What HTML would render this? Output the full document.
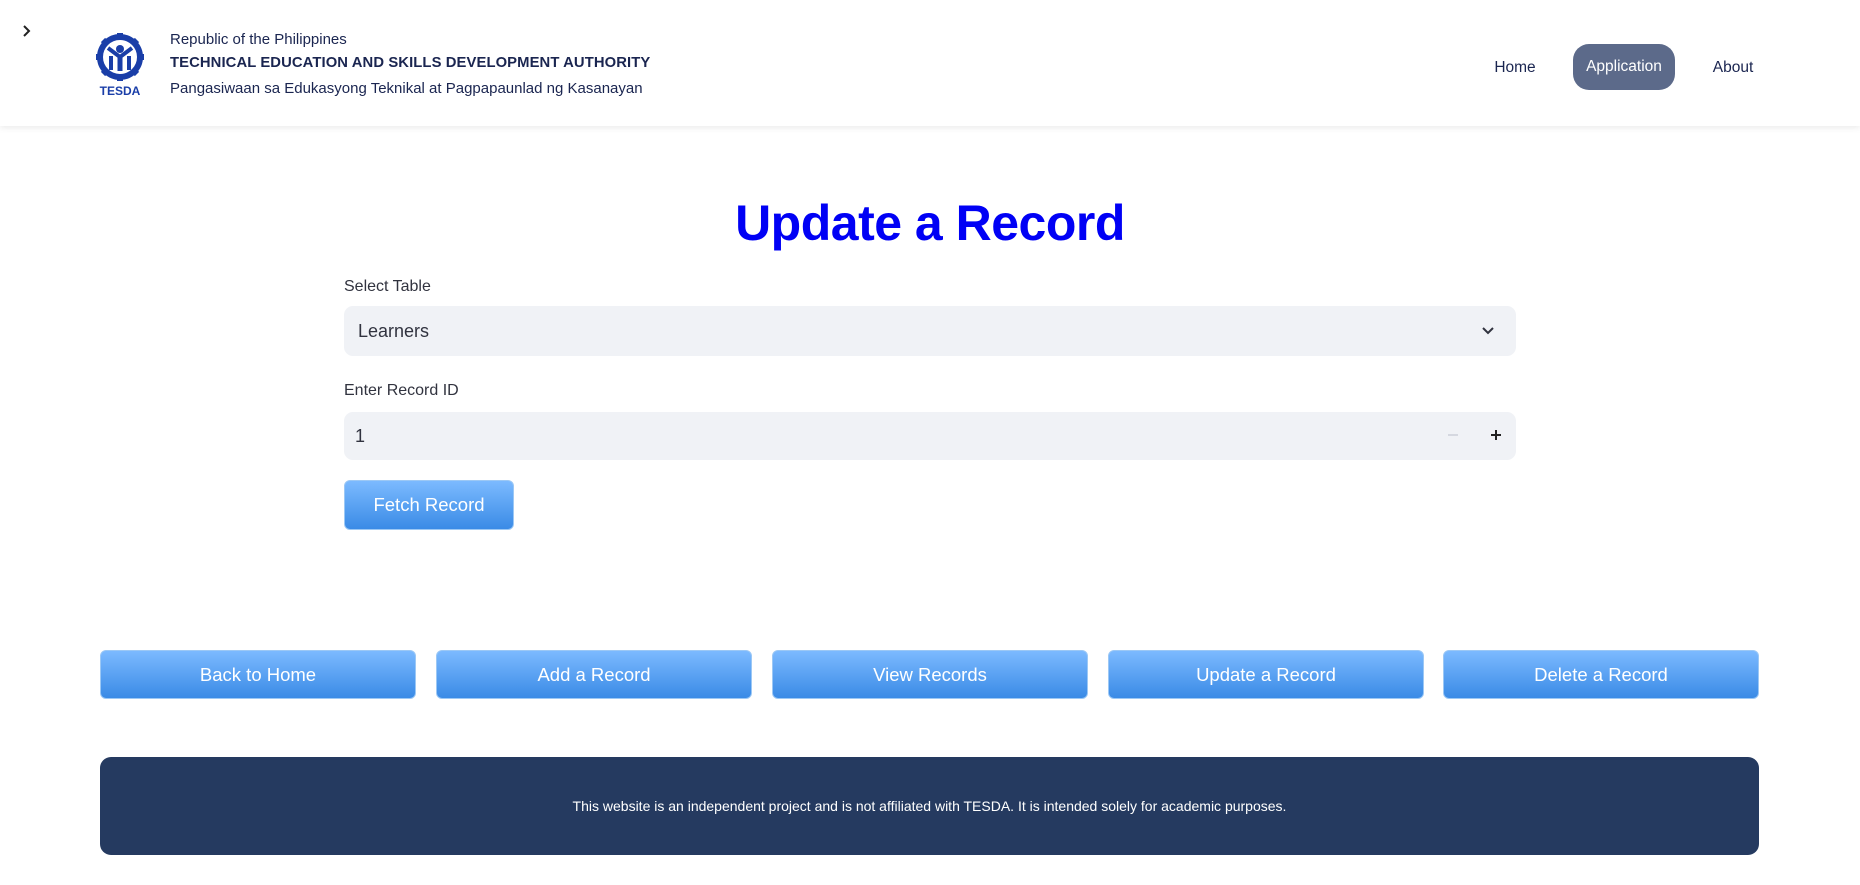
<!DOCTYPE html>
<html><head><meta charset="utf-8"><style>
*{box-sizing:border-box;margin:0;padding:0}
body{width:1860px;height:885px;background:#fff;font-family:"Liberation Sans",sans-serif;position:relative;overflow:hidden;color:#31333f}
.hdr{position:absolute;left:0;top:0;width:1860px;height:126px;background:#fff;box-shadow:0 2px 6px rgba(0,0,0,.08)}
.abs{position:absolute}
.t{position:absolute;left:170px;color:#1a2550;white-space:nowrap}
.nav{position:absolute;top:68px;transform:translate(-50%,-50%);font-size:15.5px;color:#1a2550}
.pill{position:absolute;left:1573px;top:44px;width:102px;height:46px;border-radius:16px;background:#5c6a8a;color:#fff;font-size:15.5px;display:flex;align-items:center;justify-content:center}
h1{position:absolute;left:0;width:1860px;top:190px;text-align:center;font-size:50px;font-weight:bold;color:#0000f5;line-height:66px;letter-spacing:-0.5px}
.lbl{position:absolute;left:344px;font-size:16px;color:#31333f}
.box{position:absolute;left:344px;width:1172px;background:#f0f2f6;border-radius:9px}
.btn{position:absolute;background:linear-gradient(#7cbaff,#3a8be6);border:1px solid #9cc8f5;border-radius:6px;color:#fff;font-size:18.5px;display:flex;align-items:center;justify-content:center}
.foot{position:absolute;left:100px;top:757px;width:1659px;height:98px;background:#253a60;border-radius:11px;color:#fff;font-size:14px;display:flex;align-items:center;justify-content:center}
</style></head><body>
<div class="hdr">
 <svg class="abs" style="left:20px;top:23px" width="14" height="16" viewBox="0 0 14 16"><path d="M4 3l5 5-5 5" fill="none" stroke="#222" stroke-width="2"/></svg>
 <svg class="abs" style="left:94px;top:32px" width="52" height="66" viewBox="0 0 52 66">
  <g fill="#1a3ea8">
   <circle cx="26" cy="25" r="20" fill="none" stroke="#1a3ea8" stroke-width="6"/>
   <g stroke="#1a3ea8" stroke-width="6">
    <path d="M26 1v6M26 43v6M2 25h6M44 25h6M9 8l4 4M43 8l-4 4M9 42l4-4M43 42l-4-4"/>
   </g>
   <circle cx="26" cy="17" r="4"/>
   <path d="M14 16l12 9 12-9" fill="none" stroke="#1a3ea8" stroke-width="4"/>
   <rect x="23.5" y="24" width="5" height="15"/>
   <rect x="15" y="24" width="4" height="14"/><rect x="33" y="24" width="4" height="14"/>
  </g>
  <text x="26" y="63" text-anchor="middle" font-family="Liberation Sans" font-weight="bold" font-size="12" fill="#1a3ea8">TESDA</text>
 </svg>
 <div class="t" style="top:31px;font-size:15px">Republic of the Philippines</div>
 <div class="t" style="top:55px;font-size:14.8px;font-weight:bold;letter-spacing:0.1px">TECHNICAL EDUCATION AND SKILLS DEVELOPMENT AUTHORITY</div>
 <div class="t" style="top:80px;font-size:15px">Pangasiwaan sa Edukasyong Teknikal at Pagpapaunlad ng Kasanayan</div>
 <div class="nav" style="left:1515px">Home</div>
 <div class="pill">Application</div>
 <div class="nav" style="left:1733px">About</div>
</div>
<h1>Update a Record</h1>
<div class="lbl" style="top:278px">Select Table</div>
<div class="box" style="top:306px;height:50px"><span class="abs" style="left:14px;top:15px;font-size:18px">Learners</span>
 <svg class="abs" style="left:1137px;top:18px" width="14" height="14" viewBox="0 0 14 14"><path d="M2 4l5 5 5-5" fill="none" stroke="#31333f" stroke-width="2"/></svg></div>
<div class="lbl" style="top:382px">Enter Record ID</div>
<div class="box" style="top:412px;height:48px"><span class="abs" style="left:11px;top:14px;font-size:18px">1</span>
 <span class="abs" style="left:1104px;top:22px;width:10px;height:2px;background:#d5d8e0"></span>
 <span class="abs" style="left:1147px;top:22px;width:10px;height:2px;background:#222"></span>
 <span class="abs" style="left:1151px;top:18px;width:2px;height:10px;background:#222"></span></div>
<div class="btn" style="left:344px;top:480px;width:170px;height:50px">Fetch Record</div>
<div class="btn" style="left:100px;top:650px;width:316px;height:49px">Back to Home</div>
<div class="btn" style="left:436px;top:650px;width:316px;height:49px">Add a Record</div>
<div class="btn" style="left:772px;top:650px;width:316px;height:49px">View Records</div>
<div class="btn" style="left:1108px;top:650px;width:316px;height:49px">Update a Record</div>
<div class="btn" style="left:1443px;top:650px;width:316px;height:49px">Delete a Record</div>
<div class="foot">This website is an independent project and is not affiliated with TESDA. It is intended solely for academic purposes.</div>
</body></html>
